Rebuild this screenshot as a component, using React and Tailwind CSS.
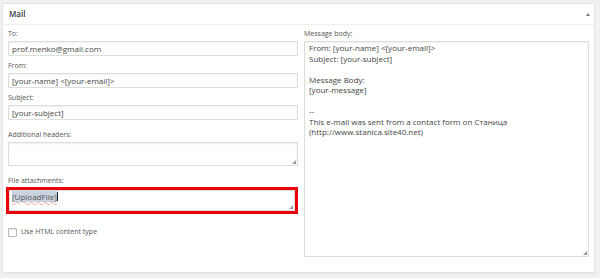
import React from "react";

const font = { fontFamily: '"Open Sans", "Liberation Sans", sans-serif' };

const Field = ({ label, value, className = "" }) => (
    <div className={className}>
        <div className="text-[7px] leading-[11px] text-[#555]">{label}</div>
        <div className="mt-[2px] h-[15px] border border-[#ddd] shadow-[inset_0_1px_2px_rgba(0,0,0,0.07)] px-[3px] text-[8px] leading-[13px] text-[#444]">
            {value}
        </div>
    </div>
);

const Grip = () => (
    <svg className="absolute right-[1px] bottom-[1px]" width="4" height="4" viewBox="0 0 4 4">
        <path d="M4 0 L4 4 L0 4 Z" fill="#999" />
    </svg>
);

const App = () => {
    const body = [
        "From: [your-name] <[your-email]>",
        "Subject: [your-subject]",
        "",
        "Message Body:",
        "[your-message]",
        "",
        "--",
        "This e-mail was sent from a contact form on Станица",
        "(http://www.stanica.site40.net)",
    ];

    return (
        <div className="w-[600px] h-[278px] bg-[#f1f1f1] pt-[3px] pl-[2px] pr-[5px] pb-[5px]" style={font}>
            <div className="h-full bg-white border border-[#e5e5e5] shadow-[0_1px_1px_rgba(0,0,0,0.04)]">
                {/* header */}
                <div className="h-[21px] flex items-center justify-between px-[6px] border-b border-[#eee]">
                    <span className="text-[8px] font-semibold text-[#32373c]">Mail</span>
                    <span className="w-0 h-0 border-l-[2px] border-r-[2px] border-b-[3px] border-l-transparent border-r-transparent border-b-[#72777c] -mr-[2px]"></span>
                </div>

                <div className="flex gap-[6px] px-[5px] pt-[3px]">
                    {/* left column */}
                    <div className="w-[290px]">
                        <Field label="To:" value="prof.menko@gmail.com" />
                        <Field className="mt-[4px]" label="From:" value="[your-name] <[your-email]>" />
                        <Field className="mt-[4px]" label="Subject:" value="[your-subject]" />

                        <div className="mt-[9px]">
                            <div className="text-[7px] leading-[11px] text-[#555]">Additional headers:</div>
                            <div className="relative mt-[2px] h-[24px] border border-[#ddd] shadow-[inset_0_1px_2px_rgba(0,0,0,0.07)]">
                                <Grip />
                            </div>
                        </div>

                        <div className="mt-[9px]">
                            <div className="text-[7px] leading-[11px] text-[#555]">File attachments:</div>
                            <div className="relative mt-[1px] -ml-[2px] h-[27px] border-[3px] border-[#e8000b]">
                                <div className="relative h-full border border-[#ddd] px-[2px] text-[8px] leading-[11px] text-[#555]">
                                    <span className="bg-[#c9d3df] underline decoration-wavy decoration-[#f4a0a0] decoration-[0.5px] underline-offset-[1px]">[UploadFile]</span>
                                    <span className="inline-block w-[1px] h-[9px] bg-[#222] align-[-1px]"></span>
                                    <Grip />
                                </div>
                            </div>
                        </div>

                        <div className="mt-[13px] flex items-center gap-[4px]">
                            <span className="w-[9px] h-[9px] border border-[#b4b9be] rounded-[1px] bg-white shadow-[inset_0_1px_2px_rgba(0,0,0,0.1)]"></span>
                            <span className="text-[7px] text-[#555]">Use HTML content type</span>
                        </div>
                    </div>

                    {/* right column */}
                    <div className="flex-1">
                        <div className="text-[7px] leading-[11px] text-[#555]">Message body:</div>
                        <div className="relative mt-[2px] h-[216px] border border-[#ddd] shadow-[inset_0_1px_2px_rgba(0,0,0,0.07)] px-[4px] pt-[1px] text-[8px] leading-[10.5px] text-[#444]">
                            {body.map((line, i) => (
                                <div key={i} className="h-[10.5px] whitespace-pre">{line}</div>
                            ))}
                            <Grip />
                        </div>
                    </div>
                </div>
            </div>
        </div>
    );
};

export default App;
